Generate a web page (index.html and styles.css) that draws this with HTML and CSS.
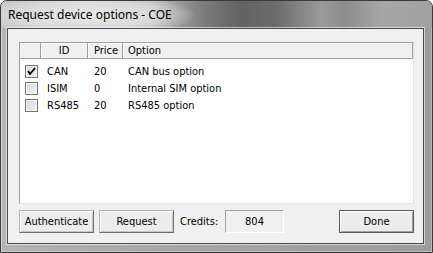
FILE: index.html
```html
<!DOCTYPE html>
<html lang="en">
<head>
  <meta charset="UTF-8" />
  <title>Request device options - COE</title>
  <link rel="stylesheet" href="styles.css">
</head>
<body>
  <div class="window">
    <div class="titlebar">
      <span class="title">Request device options - COE</span>
    </div>

    <div class="client">
      <!-- Options list -->
      <div class="listview">
        <div class="lv-header">
          <div class="col col-check"></div>
          <div class="col col-id center">ID</div>
          <div class="col col-price">Price</div>
          <div class="col col-option">Option</div>
        </div>
        <div class="lv-body">
          <div class="lv-row">
            <div class="col col-check"><span class="checkbox checked"><svg width="11" height="11" viewBox="0 0 11 11"><polyline points="2,5 4,8 9,2" fill="none" stroke="#000" stroke-width="1.8"/></svg></span></div>
            <div class="col col-id">CAN</div>
            <div class="col col-price">20</div>
            <div class="col col-option">CAN bus option</div>
          </div>
          <div class="lv-row">
            <div class="col col-check"><span class="checkbox"></span></div>
            <div class="col col-id">ISIM</div>
            <div class="col col-price">0</div>
            <div class="col col-option">Internal SIM option</div>
          </div>
          <div class="lv-row">
            <div class="col col-check"><span class="checkbox"></span></div>
            <div class="col col-id">RS485</div>
            <div class="col col-price">20</div>
            <div class="col col-option">RS485 option</div>
          </div>
        </div>
      </div>

      <!-- Buttons -->
      <div class="footer">
        <button class="btn">Authenticate</button>
        <button class="btn">Request</button>
        <span class="credits-label">Credits:</span>
        <div class="credits-box">804</div>
        <button class="btn btn-default">Done</button>
      </div>
    </div>
  </div>
</body>
</html>
```

FILE: styles.css
```css
/* Reset */
* {
  margin: 0;
  padding: 0;
  box-sizing: border-box;
}

body {
  width: 433px;
  height: 253px;
  overflow: hidden;
  font-family: 'DejaVu Sans Condensed', 'DejaVu Sans', sans-serif;
  font-size: 11px;
  color: #000;
  background: #fff;
}

/* Window frame */
.window {
  width: 433px;
  height: 253px;
  border: 1px solid #3a3a3a;
  border-radius: 7px 7px 0 0;
  background: linear-gradient(to right, #b4b4b4 0, #a6a6a6 40%, #9c9c9c 100%);
  box-shadow: inset 1px 1px 0 rgba(255, 255, 255, 0.45), inset -1px -1px 0 rgba(255, 255, 255, 0.3);
  display: flex;
  flex-direction: column;
}

.titlebar {
  height: 27px;
  border-radius: 6px 6px 0 0;
  background:
    radial-gradient(ellipse 110px 22px at 85px 14px, rgba(235, 235, 235, 0.95) 0, rgba(225, 225, 225, 0.8) 60%, rgba(225, 225, 225, 0) 100%),
    linear-gradient(to right, #c4c4c4 0, #bcbcbc 150px, #7a7a7a 205px, #626262 240px, #6c6c6c 275px, #9a9a9a 320px, #8c8c8c 345px, #a6a6a6 380px, #a2a2a2 100%);
  padding: 6px 0 0 7px;
}

.title {
  font-family: 'Noto Sans', 'Open Sans', sans-serif;
  font-size: 12px;
  line-height: 16px;
  color: #000;
}

/* Client area */
.client {
  width: 417px;
  height: 216px;
  margin: 0 8px 0 6px;
  border: 1px solid #4a4a4a;
  box-shadow: 0 0 0 1px rgba(255, 255, 255, 0.55);
  background-color: #f0f0f0;
  padding: 13px 9px 0 11px;
  display: flex;
  flex-direction: column;
}

/* List view */
.listview {
  height: 162px;
  background-color: #fff;
  border: 1px solid;
  border-color: #a0a0a0 #e3e3e3 #e3e3e3 #a0a0a0;
  display: flex;
  flex-direction: column;
}

.lv-header {
  display: flex;
  height: 16px;
  background-color: #f0f0f0;
  border-bottom: 1px solid #a0a0a0;
  border-right: 1px solid #a0a0a0;
  line-height: 15px;
}

.lv-header .col {
  border-right: 1px solid #a0a0a0;
  box-shadow: inset 1px 1px 0 #fff;
}

.lv-header .col-option {
  border-right: none;
}

.col {
  padding-left: 6px;
  white-space: nowrap;
}

.col.center {
  padding-left: 0;
  text-align: center;
}

.col-check {
  width: 21px;
  padding-left: 5px;
}

.col-id {
  width: 47px;
}

.col-price {
  width: 35px;
}

.col-option {
  flex: 1;
  padding-left: 5px;
}

.lv-body {
  padding-top: 4px;
}

.lv-row {
  display: flex;
  height: 17px;
  line-height: 17px;
}

.lv-row .col-check {
  display: flex;
  align-items: center;
}

/* Checkbox */
.checkbox {
  width: 13px;
  height: 13px;
  border: 1px solid #747474;
  background: linear-gradient(135deg, #d6d6d6 0, #f4f4f4 100%);
  box-shadow: inset 0 0 0 1px #f8f8f8;
  display: flex;
  align-items: center;
  justify-content: center;
}

.checkbox svg {
  display: block;
}

/* Footer with buttons */
.footer {
  display: flex;
  align-items: center;
  margin-top: 6px;
  height: 23px;
}

.btn {
  width: 75px;
  height: 23px;
  font-family: inherit;
  font-size: 11px;
  color: #000;
  background-color: #ececec;
  border: 1px solid;
  border-color: #b4b4b4 #6e6e6e #6e6e6e #b4b4b4;
  box-shadow: inset 1px 1px 0 #fff, inset -1px -1px 0 #c8c8c8;
  margin-right: 5px;
}

.btn-default {
  margin-left: auto;
  margin-right: 0;
  border-color: #5a5a5a;
  box-shadow: inset 1px 1px 0 #fff, inset -1px -1px 0 #a0a0a0;
}

.credits-label {
  margin-left: 1px;
  width: 45px;
}

.credits-box {
  width: 59px;
  height: 23px;
  line-height: 21px;
  text-align: center;
  border: 1px solid;
  border-color: #a0a0a0 #fff #fff #a0a0a0;
  background-color: #f0f0f0;
}
```
